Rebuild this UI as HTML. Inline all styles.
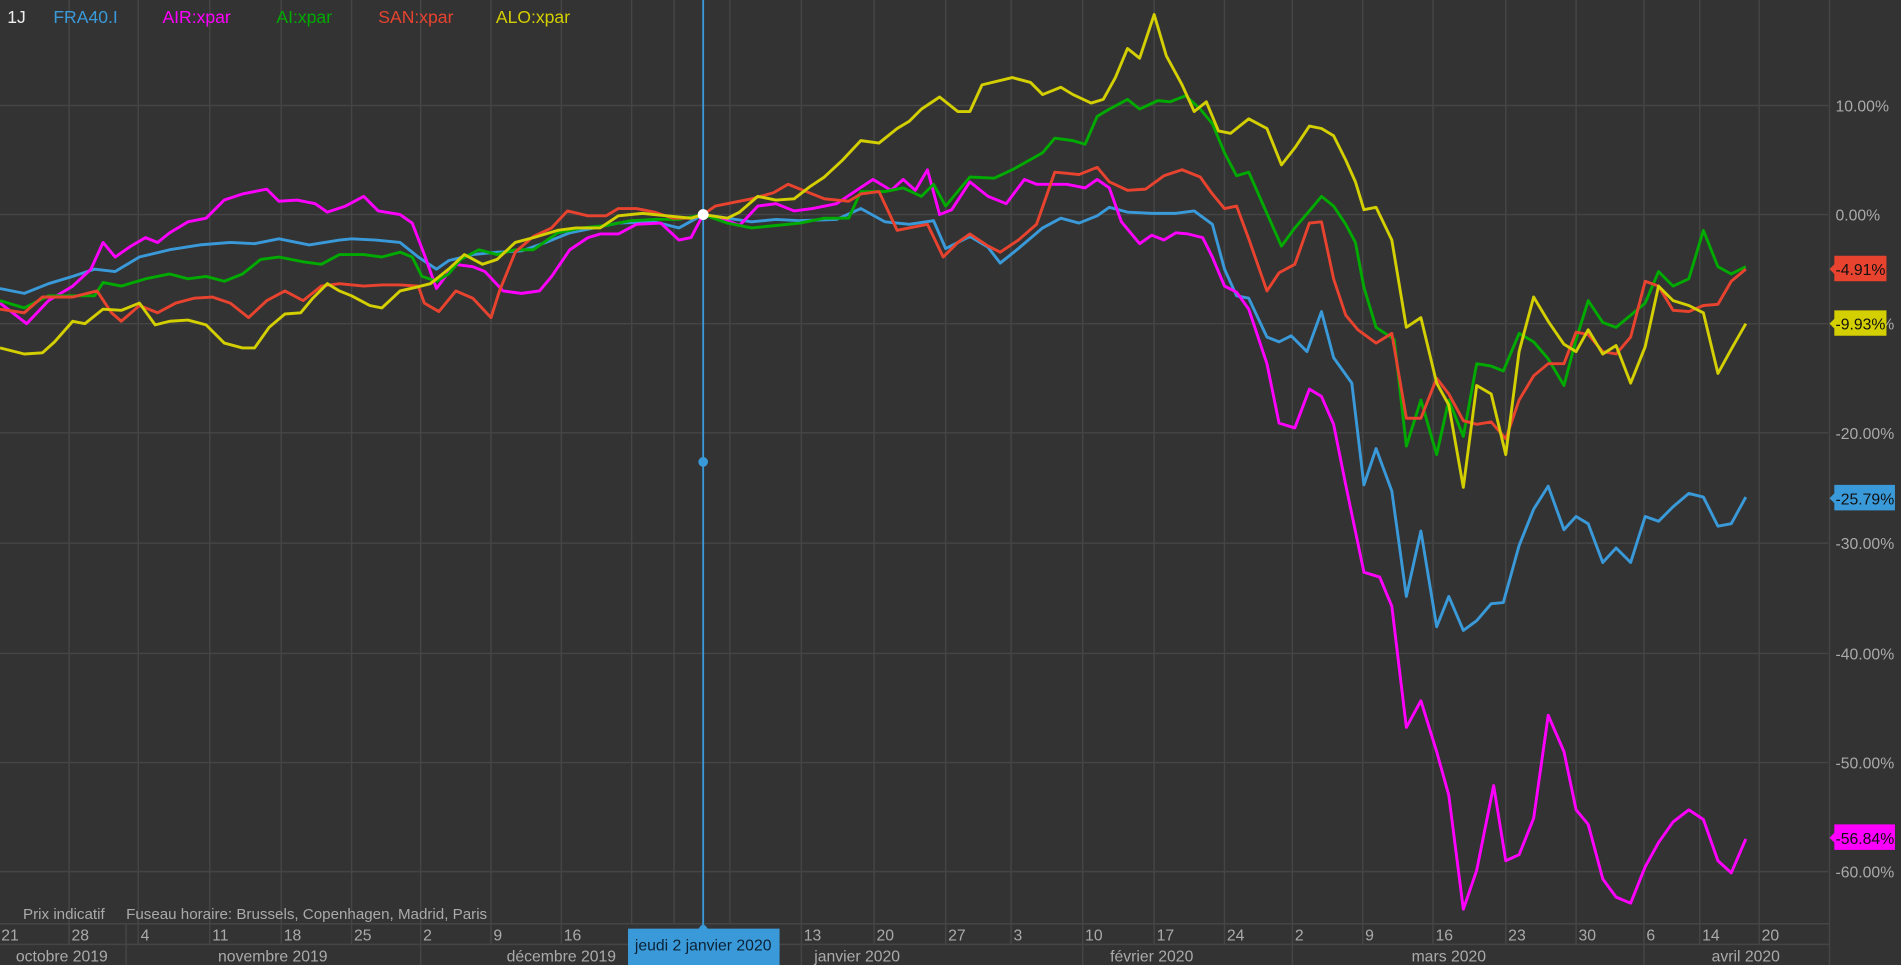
<!DOCTYPE html>
<html><head><meta charset="utf-8"><style>
html,body{margin:0;padding:0;background:#333;overflow:hidden}
svg{display:block}
text{font-family:"Liberation Sans",sans-serif}
</style></head><body>
<svg width="1901" height="965" viewBox="0 0 1568 796" preserveAspectRatio="none" xmlns="http://www.w3.org/2000/svg">
<rect width="1568" height="796" fill="#333"/>
<g stroke="#454545" stroke-width="1.2" fill="none">
<path d="M57 0V779M114 0V762M173 0V762M232 0V762M290 0V762M347 0V762M405 0V762M463 0V762M521 0V762M556 0V762M602 0V762M661 0V762M721 0V762M780 0V762M834 0V762M893 0V762M952 0V762M1010 0V762M1066 0V762M1124 0V762M1182 0V762M1242 0V762M1300 0V762M1356 0V762M1402 0V762M1451 0V762"/>
<path d="M0 87H1508M0 177H1508M0 267H1508M0 357H1508M0 448H1508M0 539H1508M0 629H1508M0 719H1508"/>
<path d="M0 762H1509M0 779H1509M1509 0V796"/>
<path d="M57 762V779M104 762V796M114 762V779M173 762V779M232 762V779M290 762V779M347 762V796M405 762V779M463 762V779M661 762V796M721 762V779M780 762V779M834 762V779M893 762V796M952 762V779M1010 762V779M1066 762V796M1124 762V779M1182 762V779M1242 762V779M1300 762V779M1356 762V796M1402 762V779M1451 762V779"/>
</g>
<g fill="#aaa" font-size="13">
<text x="1514" y="92">10.00%</text><text x="1514" y="182">0.00%</text><text x="1514" y="272">-10.00%</text><text x="1514" y="362">-20.00%</text><text x="1514" y="453">-30.00%</text><text x="1514" y="544">-40.00%</text><text x="1514" y="634">-50.00%</text><text x="1514" y="724">-60.00%</text>
</g>
<g fill="#aaa" font-size="13">
<text x="1" y="776">21</text><text x="59" y="776">28</text><text x="116" y="776">4</text><text x="175" y="776">11</text><text x="234" y="776">18</text><text x="292" y="776">25</text><text x="349" y="776">2</text><text x="407" y="776">9</text><text x="465" y="776">16</text><text x="663" y="776">13</text><text x="723" y="776">20</text><text x="782" y="776">27</text><text x="836" y="776">3</text><text x="895" y="776">10</text><text x="954" y="776">17</text><text x="1012" y="776">24</text><text x="1068" y="776">2</text><text x="1126" y="776">9</text><text x="1184" y="776">16</text><text x="1244" y="776">23</text><text x="1302" y="776">30</text><text x="1358" y="776">6</text><text x="1404" y="776">14</text><text x="1453" y="776">20</text>
<g text-anchor="middle"><text x="51" y="793">octobre 2019</text><text x="225" y="793">novembre 2019</text><text x="463" y="793">décembre 2019</text><text x="707" y="793">janvier 2020</text><text x="950" y="793">février 2020</text><text x="1195" y="793">mars 2020</text><text x="1440" y="793">avril 2020</text></g>
<text x="19" y="758" font-size="12.5">Prix indicatif</text><text x="104" y="758" font-size="12.5">Fuseau horaire: Brussels, Copenhagen, Madrid, Paris</text>
</g>
<g font-size="14.5">
<text x="6" y="19" fill="#eee">1J</text>
<text x="44" y="19" fill="#3a9ad9">FRA40.I</text>
<text x="134" y="19" fill="#ff00ff">AIR:xpar</text>
<text x="228" y="19" fill="#00aa00">AI:xpar</text>
<text x="312" y="19" fill="#e8432f">SAN:xpar</text>
<text x="409" y="19" fill="#d4cf00">ALO:xpar</text>
</g>
<line x1="580" y1="0" x2="580" y2="766" stroke="#3a9ad9" stroke-width="1.5"/>
<g fill="none" stroke-width="2.4" stroke-linejoin="round">
<polyline stroke="#3a9ad9" points="0,238 20,242 40,234 60,228 78,222 95,224 115,212 140,206 165,202 190,200 210,201 230,197 255,202 280,198 290,197 310,198 330,200 345,212 360,222 370,215 390,210 410,208 430,207 450,200 470,192 490,188 510,184 540,183 560,188 580,177 600,180 620,183 640,181 660,182 690,181 710,172 730,183 750,185 770,182 780,205 800,195 815,204 825,217 840,205 860,188 875,180 890,184 905,178 915,171 930,175 950,176 970,176 985,174 1000,185 1010,222 1020,244 1030,246 1045,278 1055,282 1065,277 1078,290 1090,257 1100,295 1115,316 1125,400 1135,370 1148,405 1160,492 1172,438 1185,517 1195,492 1207,520 1218,512 1230,498 1240,497 1253,450 1265,420 1277,401 1290,437 1300,426 1310,432 1322,464 1333,452 1345,464 1357,426 1368,430 1380,418 1393,407 1405,410 1417,434 1428,432 1440,410"/>
<polyline stroke="#ff00ff" points="0,250 22,267 40,248 60,236 75,222 85,200 95,212 108,203 120,196 130,200 140,192 155,183 170,180 185,165 200,160 220,156 230,166 245,165 260,168 270,175 285,170 300,162 312,174 330,177 340,184 350,210 360,238 375,218 390,220 400,224 415,240 430,242 445,240 455,228 470,206 485,196 495,193 510,193 525,185 545,184 560,198 570,196 580,177 595,180 610,186 625,170 640,168 655,174 670,172 690,168 705,158 720,148 735,157 745,148 755,157 765,140 775,177 785,173 800,150 815,162 830,168 845,148 855,152 865,152 880,152 895,155 905,148 915,155 925,183 940,201 950,194 960,198 970,192 980,193 992,196 1000,212 1010,236 1020,241 1030,255 1045,300 1055,349 1068,353 1080,321 1090,327 1100,350 1110,400 1125,472 1138,476 1148,500 1160,600 1172,578 1185,620 1195,656 1207,750 1218,718 1232,648 1242,710 1253,705 1265,675 1277,590 1290,620 1300,668 1310,680 1322,725 1333,740 1345,745 1357,715 1368,695 1380,678 1393,668 1405,676 1417,710 1428,720 1440,692"/>
<polyline stroke="#00aa00" points="0,248 20,254 40,244 60,244 78,244 85,233 100,236 120,230 140,226 155,230 170,228 185,232 200,226 215,214 230,212 250,216 265,218 280,210 300,210 315,212 330,208 340,212 348,228 360,232 370,226 380,214 395,206 410,210 425,206 440,206 460,192 480,188 500,186 520,182 540,181 560,181 580,177 600,184 620,188 640,186 660,184 680,180 700,180 710,158 730,158 745,155 760,162 770,152 780,170 800,146 820,147 835,140 860,126 870,114 885,116 895,119 905,96 915,90 930,82 940,90 955,83 965,84 978,79 990,90 1000,102 1010,126 1020,145 1030,142 1045,176 1057,203 1068,188 1080,174 1090,162 1100,170 1110,185 1118,200 1125,237 1135,270 1150,280 1160,368 1172,330 1185,375 1195,330 1207,360 1218,300 1230,302 1240,306 1253,275 1265,282 1277,296 1290,318 1300,280 1310,248 1322,266 1333,270 1345,260 1357,250 1368,224 1380,236 1393,230 1405,190 1417,220 1428,226 1440,220"/>
<polyline stroke="#e8432f" points="0,255 20,258 35,245 60,245 80,240 92,258 100,265 115,252 130,258 145,250 160,246 175,245 190,250 205,262 220,248 235,240 250,248 265,236 280,234 300,236 315,235 330,235 345,236 350,250 362,257 376,240 390,246 405,262 412,240 425,208 440,195 455,188 468,174 485,178 500,178 510,172 525,172 540,175 555,180 570,180 580,177 590,170 605,167 620,164 638,159 650,152 665,158 680,164 700,166 710,160 725,158 740,190 755,187 765,185 778,212 790,200 800,193 815,203 825,208 840,198 855,185 870,142 880,143 890,144 905,138 915,150 930,157 945,156 960,145 975,140 990,146 1000,160 1010,172 1020,170 1030,197 1045,240 1055,225 1068,218 1080,184 1090,183 1100,230 1110,260 1120,272 1135,283 1148,275 1160,345 1172,345 1185,312 1195,325 1207,347 1218,350 1230,348 1242,362 1253,330 1265,310 1277,300 1290,300 1300,274 1310,276 1322,290 1333,292 1345,278 1357,232 1368,236 1380,256 1393,257 1405,252 1417,251 1428,232 1440,222"/>
<polyline stroke="#d4cf00" points="0,287 20,292 35,291 45,282 60,265 70,267 85,255 100,256 115,250 128,268 140,265 155,264 170,268 185,283 200,287 210,287 222,270 235,259 248,258 258,246 270,234 280,240 290,244 305,252 315,254 330,240 343,237 355,234 370,222 383,210 398,218 410,214 425,200 440,196 460,190 475,188 495,188 510,178 530,176 550,178 570,180 580,177 600,180 610,175 625,162 640,165 655,164 668,154 680,146 695,132 710,116 725,118 740,106 750,100 760,90 775,80 790,92 800,92 810,70 835,64 850,68 860,78 875,72 885,78 900,85 910,82 920,64 930,40 940,48 952,12 962,46 975,70 985,92 995,84 1005,108 1015,110 1030,98 1045,106 1057,136 1068,122 1080,104 1090,106 1100,112 1110,132 1118,150 1125,173 1135,171 1148,198 1160,270 1172,262 1185,316 1195,334 1207,402 1218,318 1230,325 1242,375 1253,290 1265,245 1277,265 1290,284 1300,290 1310,272 1322,292 1333,285 1345,316 1357,286 1368,236 1380,248 1393,252 1405,258 1417,308 1428,288 1440,267"/>
</g>
<circle cx="580" cy="177" r="4.5" fill="#fff"/>
<circle cx="580" cy="381" r="4" fill="#3a9ad9"/>
<circle cx="580" cy="766" r="3" fill="#3a9ad9"/>
<g font-size="13" fill="#111">
<path d="M1509 222 l4 -4 v-7 h43 v21 h-43 v-6z" fill="#e8432f"/><text x="1514" y="227">-4.91%</text>
<path d="M1509 267 l4 -4 v-7 h43 v21 h-43 v-6z" fill="#d4cf00"/><text x="1514" y="272">-9.93%</text>
<path d="M1509 411 l4 -4 v-7 h50 v21 h-50 v-6z" fill="#3a9ad9"/><text x="1514" y="416">-25.79%</text>
<path d="M1509 691 l4 -4 v-7 h50 v21 h-50 v-6z" fill="#ff00ff"/><text x="1514" y="696">-56.84%</text>
</g>
<rect x="518" y="766" width="125" height="30" fill="#3a9ad9"/>
<path d="M576 766 l4 -4 l4 4z" fill="#3a9ad9"/>
<text x="580" y="784" text-anchor="middle" font-size="13" fill="#0c2235">jeudi 2 janvier 2020</text>
</svg>
</body></html>
